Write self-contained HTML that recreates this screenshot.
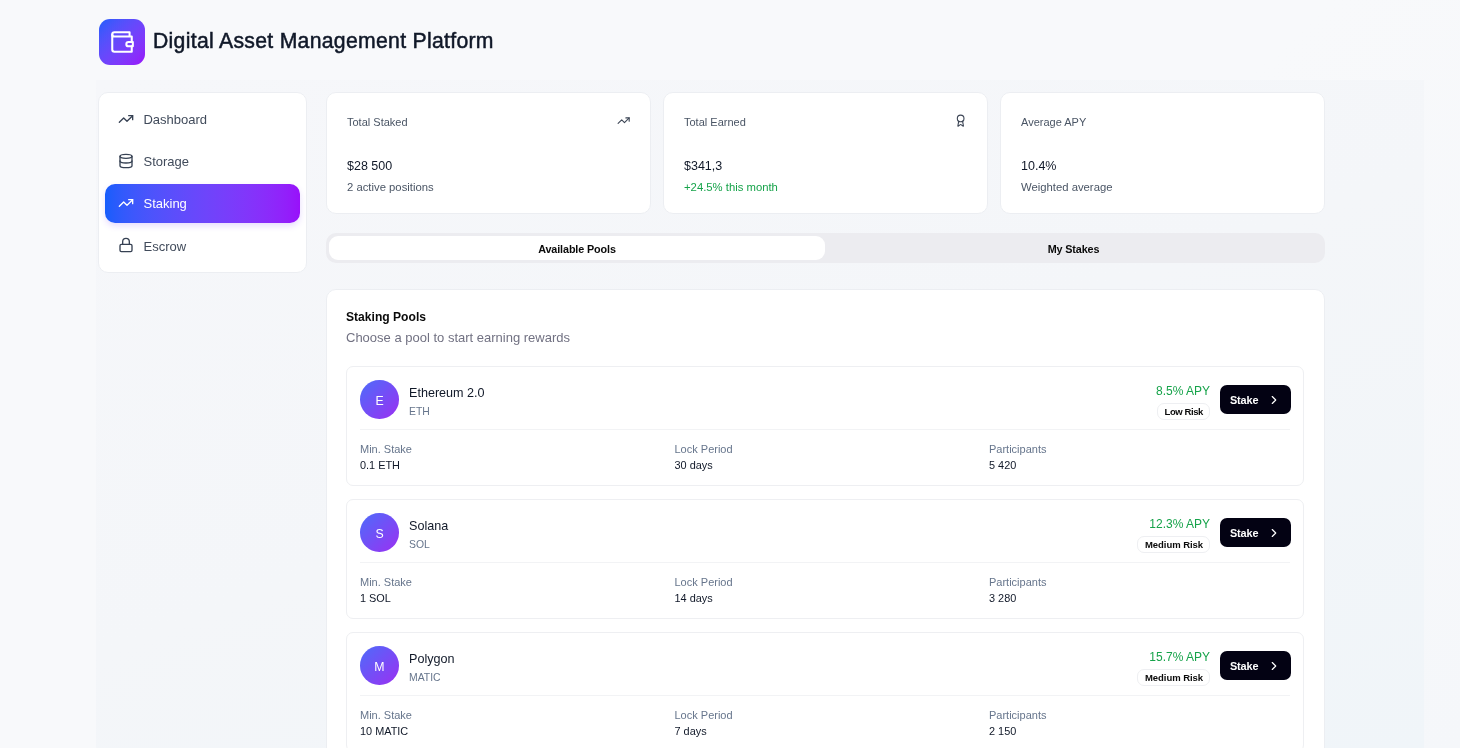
<!DOCTYPE html>
<html><head><meta charset="utf-8">
<style>
*{box-sizing:border-box;margin:0;padding:0}
html,body{width:1460px;height:748px;overflow:hidden}
body{font-family:"Liberation Sans",sans-serif;background:linear-gradient(135deg,#f8f9fb 0%,#f8f9fb 60%,#f5f7fa 100%);color:#101828;position:relative}
.abs{position:absolute;will-change:transform}
svg{display:block}
.logo{left:98.6px;top:18.8px;width:45.5px;height:45.5px;border-radius:11px;background:linear-gradient(in oklab 135deg,#155dfc,#9810fa);display:flex;align-items:center;justify-content:center}
.title{left:152.5px;top:26.6px;font-size:21.2px;line-height:28px;color:#101828;white-space:nowrap;letter-spacing:0.3px;-webkit-text-stroke:0.5px #101828}
.card{background:#fff;border:1px solid #eceef2;border-radius:10px}
.side{left:98px;top:92px;width:209px;height:181px}
.nav{position:absolute;left:6px;width:195px;height:39px;border-radius:10px;display:flex;align-items:center;padding-left:13.2px;font-size:13px;letter-spacing:0px;color:#414b5b}
.nav svg{margin-right:9.3px;margin-top:-2px}
.nav.active{background:linear-gradient(in oklab 90deg,#155dfc,#9810fa);color:#fff;box-shadow:0 3px 6px rgba(120,60,250,.18)}
.stat{top:92px;width:325px;height:122px}
.stat .lbl{position:absolute;left:20px;top:22.5px;font-size:11px;color:#4a5565}
.stat .val{position:absolute;left:20px;top:66px;font-size:12.5px;color:#101828}
.stat .sub{position:absolute;left:20px;top:87.8px;font-size:11.3px;color:#4a5565}
.stat .ic{position:absolute;right:19px;top:113px}
.tabs{left:326px;top:233px;width:999px;height:30px;background:#ececf0;border-radius:10px}
.tab{position:absolute;top:3px;height:24px;display:flex;align-items:center;justify-content:center;font-size:10.8px;letter-spacing:-0.12px;color:#0a0a0a;font-weight:bold;padding-top:1.5px}
.tab.on{left:3px;width:496px;background:#fff;border-radius:9px}
.pools{left:326px;top:289px;width:999px;height:520px;border-radius:10px}
.ph{position:absolute;left:19px;top:20px;font-size:12.1px;font-weight:bold;color:#0a0a0a}
.pd{position:absolute;left:19px;top:39.5px;font-size:13px;color:#717182}
.pool{position:absolute;left:19px;width:958px;height:120px;border:1px solid #eeeff2;border-radius:7px;background:#fff}
.av{position:absolute;left:13.2px;top:13px;width:38.6px;height:38.6px;border-radius:50%;background:linear-gradient(135deg,#4d6cfa,#9b30f2);color:#fff;font-size:12.3px;padding-top:2.5px;display:flex;align-items:center;justify-content:center}
.pn{position:absolute;left:62px;top:19px;font-size:12.6px;color:#101828}
.ps{position:absolute;left:62px;top:38.5px;font-size:10.4px;color:#66758c}
.apy{position:absolute;right:93px;top:16.8px;font-size:12px;color:#16a34a;white-space:nowrap}
.risk{position:absolute;right:93px;top:35.6px;height:17.2px;border:1px solid #eeeff2;border-radius:7px;font-size:9.5px;font-weight:bold;letter-spacing:-0.05px;color:#0a0a0a;display:flex;align-items:center;padding:0 6px 0 6.5px;white-space:nowrap}
.btn{position:absolute;right:12.5px;top:18.3px;width:70.5px;height:29px;background:#030213;border-radius:7px;color:#fff;font-size:10.9px;letter-spacing:-0.15px;font-weight:bold;display:flex;align-items:center;padding-left:10px;padding-top:1px}
.btn svg{margin-left:9px;margin-top:-1px}
.sep{position:absolute;left:13px;right:13px;top:61.5px;height:1px;background:#f2f3f5}
.col{position:absolute;top:74px}
.col .k{font-size:11px;color:#66758c;line-height:16px}
.col .v{font-size:10.9px;color:#101828;line-height:17px}
</style></head><body>

<div class="abs" style="left:96px;top:80px;width:1328px;height:668px;background:linear-gradient(160deg,#f6f7fa 0%,#f4f6f9 50%,#f0f5f9 100%)"></div>
<div class="abs logo"><svg width="26" height="26" viewBox="0 0 24 24" fill="none" stroke="#fff" stroke-width="1.9" stroke-linecap="round" stroke-linejoin="round"><path d="M21 12V7H5a2 2 0 0 1 0-4h14v4"/><path d="M3 5v14a2 2 0 0 0 2 2h16v-5"/><path d="M18 12a2 2 0 0 0 0 4h4v-4Z"/></svg></div>
<div class="abs title">Digital Asset Management Platform</div>

<div class="abs card side">
  <div class="nav" style="top:7.3px"><svg width="16" height="16" viewBox="0 0 24 24" fill="none" stroke="#364153" stroke-width="2" stroke-linecap="round" stroke-linejoin="round"><polyline points="22 7 13.5 15.5 8.5 10.5 2 17"/><polyline points="16 7 22 7 22 13"/></svg>Dashboard</div>
  <div class="nav" style="top:49.4px"><svg width="16" height="16" viewBox="0 0 24 24" fill="none" stroke="#364153" stroke-width="2" stroke-linecap="round" stroke-linejoin="round"><ellipse cx="12" cy="5" rx="9" ry="3"/><path d="M3 5V19A9 3 0 0 0 21 19V5"/><path d="M3 12A9 3 0 0 0 21 12"/></svg>Storage</div>
  <div class="nav active" style="top:91.3px"><svg width="16" height="16" viewBox="0 0 24 24" fill="none" stroke="#fff" stroke-width="2" stroke-linecap="round" stroke-linejoin="round"><polyline points="22 7 13.5 15.5 8.5 10.5 2 17"/><polyline points="16 7 22 7 22 13"/></svg>Staking</div>
  <div class="nav" style="top:133.9px"><svg width="16" height="16" viewBox="0 0 24 24" fill="none" stroke="#364153" stroke-width="2" stroke-linecap="round" stroke-linejoin="round"><rect width="18" height="11" x="3" y="11" rx="2" ry="2"/><path d="M7 11V7a5 5 0 0 1 10 0v4"/></svg>Escrow</div>
</div>

<div class="abs card stat" style="left:326px">
  <div class="lbl">Total Staked</div>
  <svg class="ic" style="position:absolute;right:19.8px;top:21.2px" width="13.3" height="13.3" viewBox="0 0 24 24" fill="none" stroke="#3d4656" stroke-width="2" stroke-linecap="round" stroke-linejoin="round"><polyline points="22 7 13.5 15.5 8.5 10.5 2 17"/><polyline points="16 7 22 7 22 13"/></svg>
  <div class="val">$28 500</div>
  <div class="sub">2 active positions</div>
</div>
<div class="abs card stat" style="left:663px">
  <div class="lbl">Total Earned</div>
  <svg style="position:absolute;right:19.6px;top:21.2px" width="13.3" height="13.3" viewBox="0 0 24 24" fill="none" stroke="#3d4656" stroke-width="2" stroke-linecap="round" stroke-linejoin="round"><path d="m15.477 12.89 1.515 8.526a.5.5 0 0 1-.81.47l-3.58-2.687a1 1 0 0 0-1.197 0l-3.586 2.686a.5.5 0 0 1-.81-.469l1.514-8.526"/><circle cx="12" cy="8" r="6"/></svg>
  <div class="val">$341,3</div>
  <div class="sub" style="color:#16a34a">+24.5% this month</div>
</div>
<div class="abs card stat" style="left:1000px">
  <div class="lbl">Average APY</div>
  <div class="val">10.4%</div>
  <div class="sub">Weighted average</div>
</div>

<div class="abs tabs">
  <div class="tab on">Available Pools</div>
  <div class="tab" style="left:499px;width:497px">My Stakes</div>
</div>

<div class="abs card pools">
  <div class="ph">Staking Pools</div>
  <div class="pd">Choose a pool to start earning rewards</div>
<!--POOLS-->
<div class="pool" style="top:76px">
    <div class="av">E</div>
    <div class="pn">Ethereum 2.0</div><div class="ps">ETH</div>
    <div class="apy">8.5% APY</div><div class="risk" style="letter-spacing:-0.4px">Low Risk</div>
    <div class="btn">Stake<svg width="14" height="14" viewBox="0 0 24 24" fill="none" stroke="#fff" stroke-width="2" stroke-linecap="round" stroke-linejoin="round"><path d="m9 18 6-6-6-6"/></svg></div>
    <div class="sep"></div>
    <div class="col" style="left:13px"><div class="k">Min. Stake</div><div class="v">0.1 ETH</div></div>
    <div class="col" style="left:327.5px"><div class="k">Lock Period</div><div class="v">30 days</div></div>
    <div class="col" style="left:642px"><div class="k">Participants</div><div class="v">5 420</div></div>
  </div>
<div class="pool" style="top:209px">
    <div class="av">S</div>
    <div class="pn">Solana</div><div class="ps">SOL</div>
    <div class="apy">12.3% APY</div><div class="risk">Medium Risk</div>
    <div class="btn">Stake<svg width="14" height="14" viewBox="0 0 24 24" fill="none" stroke="#fff" stroke-width="2" stroke-linecap="round" stroke-linejoin="round"><path d="m9 18 6-6-6-6"/></svg></div>
    <div class="sep"></div>
    <div class="col" style="left:13px"><div class="k">Min. Stake</div><div class="v">1 SOL</div></div>
    <div class="col" style="left:327.5px"><div class="k">Lock Period</div><div class="v">14 days</div></div>
    <div class="col" style="left:642px"><div class="k">Participants</div><div class="v">3 280</div></div>
  </div>
<div class="pool" style="top:342px">
    <div class="av">M</div>
    <div class="pn">Polygon</div><div class="ps">MATIC</div>
    <div class="apy">15.7% APY</div><div class="risk">Medium Risk</div>
    <div class="btn">Stake<svg width="14" height="14" viewBox="0 0 24 24" fill="none" stroke="#fff" stroke-width="2" stroke-linecap="round" stroke-linejoin="round"><path d="m9 18 6-6-6-6"/></svg></div>
    <div class="sep"></div>
    <div class="col" style="left:13px"><div class="k">Min. Stake</div><div class="v">10 MATIC</div></div>
    <div class="col" style="left:327.5px"><div class="k">Lock Period</div><div class="v">7 days</div></div>
    <div class="col" style="left:642px"><div class="k">Participants</div><div class="v">2 150</div></div>
  </div>
<!--/POOLS-->
</div>

</body></html>
